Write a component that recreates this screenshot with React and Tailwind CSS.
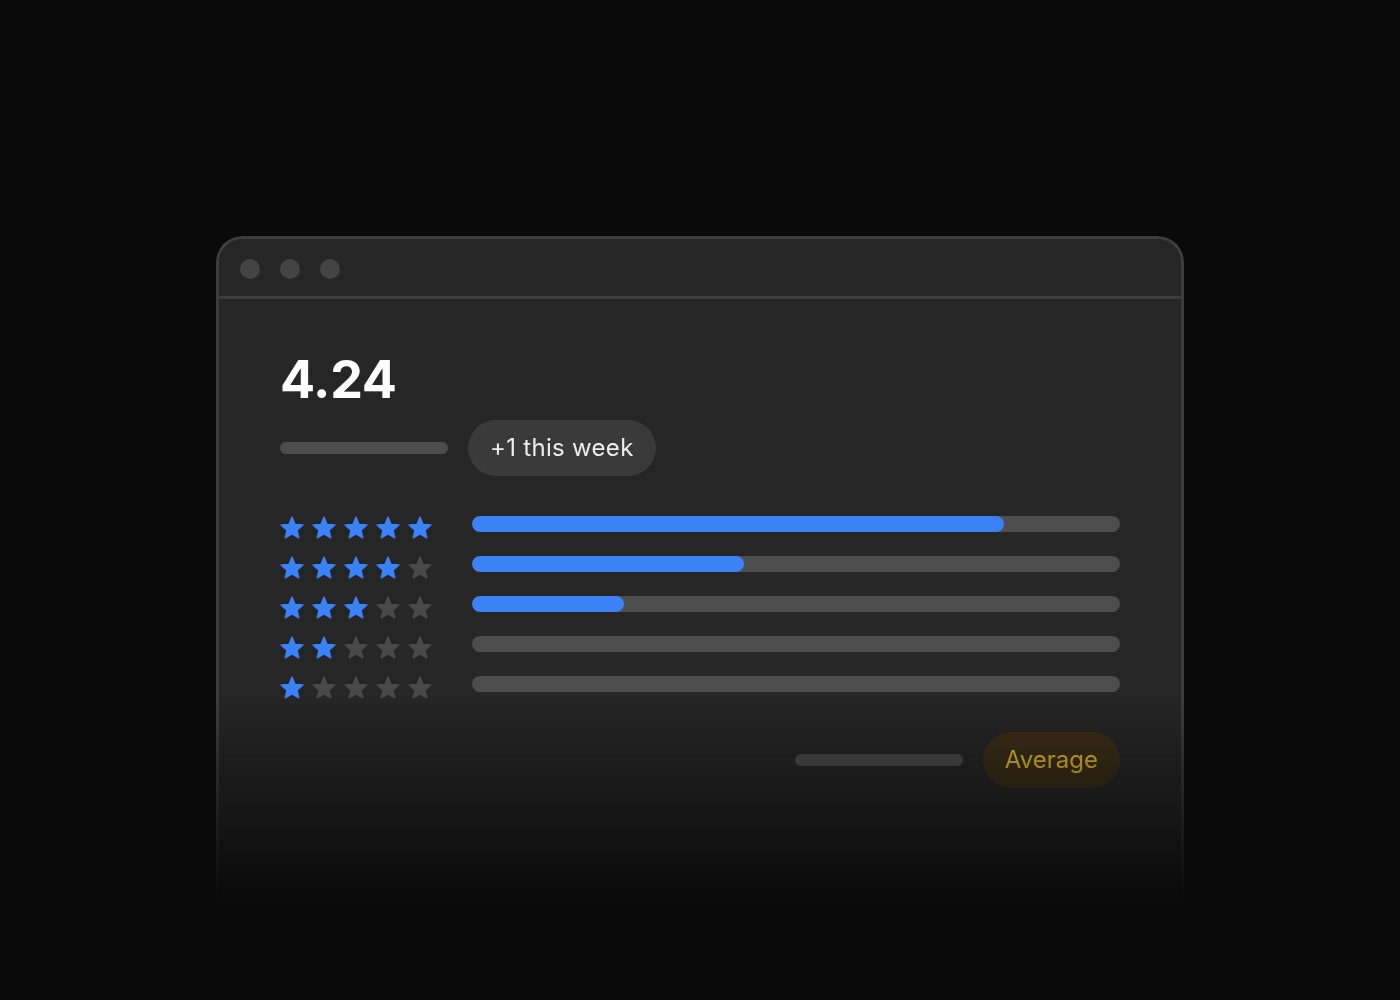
import React from 'react';

const rows = [
  { stars: 5, pct: 82.1 },
  { stars: 4, pct: 42 },
  { stars: 3, pct: 23.5 },
  { stars: 2, pct: 0 },
  { stars: 1, pct: 0 },
];

function Star({ on }) {
  return (
    <svg width="24" height="23" viewBox="0 0 24 23" className="translate-y-[3px]">
      <polygon
        points="12,1.12 15.06,8.41 22.94,9.07 16.95,14.23 18.76,21.92 12,17.82 5.24,21.92 7.05,14.23 1.06,9.07 8.94,8.41"
        fill={on ? '#3b82f6' : '#4a4a4a'}
        stroke={on ? '#3b82f6' : '#4a4a4a'}
        strokeWidth="1.4"
        strokeLinejoin="round"
      />
    </svg>
  );
}

export default function App() {
  return (
    <div className="min-h-screen bg-[#0a0a0a] flex justify-center pt-[236px] font-['Inter',sans-serif]">
      <div className="w-[968px] h-[700px] flex flex-col rounded-t-[26px] border-x-[3px] border-t-[3px] border-[#3d3d3d] bg-[#262626] [mask-image:linear-gradient(to_bottom,black_460px,transparent_670px)]">
        <div className="h-[60px] flex items-center gap-5 pl-[21px] pt-[3px] border-b-[3px] border-[#3d3d3d]">
          <span className="w-5 h-5 rounded-full bg-[#444444]" />
          <span className="w-5 h-5 rounded-full bg-[#444444]" />
          <span className="w-5 h-5 rounded-full bg-[#444444]" />
        </div>

        <div className="px-[61px] pt-[55px]">
          <div className="text-[52px] leading-none font-bold text-white tracking-[-0.3px]">4.24</div>

          <div className="mt-[14px] flex items-center gap-5">
            <div className="w-[168px] h-3 rounded-full bg-[#4d4d4d]" />
            <div className="h-14 px-[22px] rounded-full bg-[#3a3a3a] flex items-center text-[24px] tracking-[0.3px] text-[#ececec]">
              +1 this week
            </div>
          </div>

          <div className="mt-9 flex flex-col gap-4">
            {rows.map((r) => (
              <div key={r.stars} className="h-6 flex items-center gap-10">
                <div className="w-[152px] flex items-center gap-2">
                  {[1, 2, 3, 4, 5].map((i) => (
                    <Star key={i} on={i <= r.stars} />
                  ))}
                </div>
                <div className="flex-1 h-4 rounded-full bg-[#4d4d4d] overflow-hidden">
                  {r.pct > 0 && (
                    <div className="h-full rounded-full bg-[#3b82f6]" style={{ width: `${r.pct}%` }} />
                  )}
                </div>
              </div>
            ))}
          </div>

          <div className="mt-9 flex items-center justify-end gap-5">
            <div className="w-[168px] h-3 rounded-full bg-[#4d4d4d]" />
            <div className="h-14 px-[22px] rounded-full bg-[#3d2f17] flex items-center text-[24px] text-[#f2c429]">
              Average
            </div>
          </div>
        </div>
      </div>
    </div>
  );
}
